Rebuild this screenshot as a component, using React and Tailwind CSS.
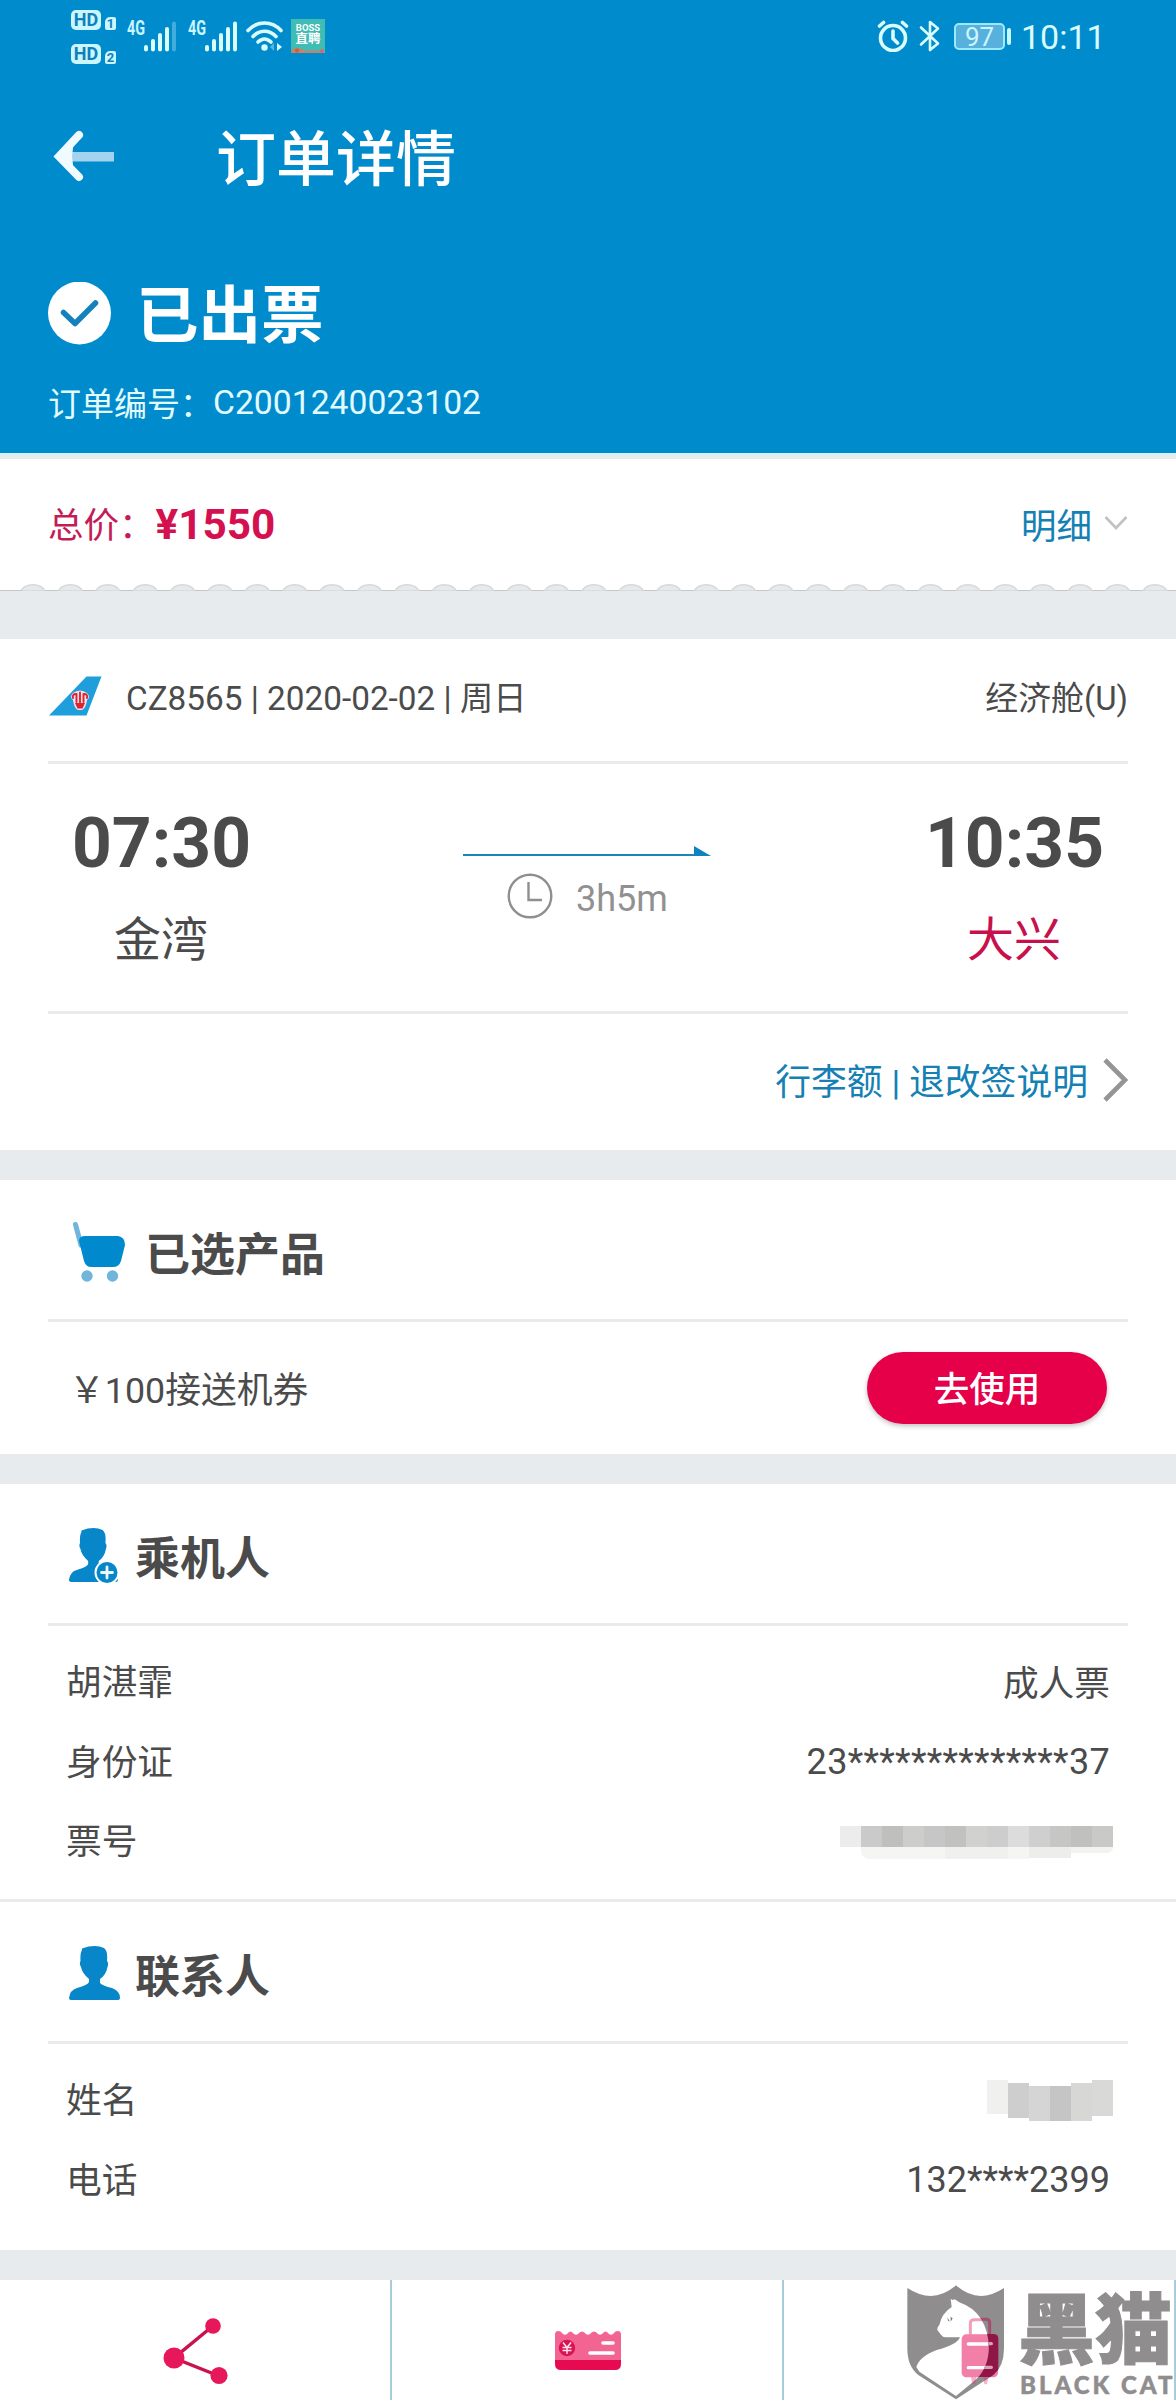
import React from "react";

const PALE = "#d9fcff";

function HdBadge({ n }) {
  return (
    <div className="flex h-[21px] items-end gap-[4px]">
      <div className="flex h-[20px] w-[30px] items-center justify-center rounded-[5px] bg-[#c9f6ff] text-[18px] leading-none font-bold text-[#0e80bd]">
        HD
      </div>
      <div className="flex h-[13px] w-[11px] items-center justify-center rounded-[2px] rounded-tl-[5px] bg-[#c9f6ff] text-[13px] leading-none font-bold text-[#0e80bd]">
        {n}
      </div>
    </div>
  );
}

function Signal({ weak }) {
  return (
    <div className="flex h-[31px] items-start">
      <span className="w-[17px] text-[20px] leading-[14px] font-bold text-[#c9f6ff]">
        <span className="inline-block origin-left scale-x-[0.72]">4G</span>
      </span>
      <svg width="33" height="31" viewBox="0 0 33 31" fill={PALE}>
        <rect x="0" y="24" width="4" height="6.5" rx="2" />
        <rect x="7" y="18" width="4" height="12.5" rx="2" />
        <rect x="14" y="12" width="4" height="18.5" rx="2" />
        <rect x="21" y="6" width="4" height="24.5" rx="2" />
        <rect x="28" y="0.5" width="4" height="30" rx="2" opacity={weak ? 0.3 : 1} />
      </svg>
    </div>
  );
}

function StatusBar() {
  return (
    <div className="flex h-[72px] justify-between pr-[74px] pl-[71px]">
      <div className="flex">
        <div className="flex flex-col gap-[13px] pt-[9px]">
          <HdBadge n="1" />
          <HdBadge n="2" />
        </div>
        <div className="flex gap-[11px] pt-[21px] pl-[11px]">
          <Signal weak />
          <Signal />
        </div>
        <svg className="mt-[20px] ml-[7px]" width="39" height="32" viewBox="0 0 39 32" fill="none" stroke={PALE} strokeWidth="3.600" strokeLinecap="round">
          <path d="M3 10.500C12 0.500 27 0.500 36 10.500" />
          <path d="M8 16.500C14.500 9.500 24.500 9.500 31 16.500" />
          <path d="M13 22C17 18 22 18 26 22" />
          <circle cx="19.500" cy="27.500" r="3.200" fill={PALE} stroke="none" />
          <path d="M29 23v8l-4-4z" fill={PALE} stroke="none" opacity="0.4" />
          <path d="M32 23l5 4-5 4z" fill={PALE} stroke="none" />
        </svg>
        <div className="relative mt-[19px] ml-[7px] flex h-[34px] w-[34px] flex-col items-center overflow-hidden bg-[#3fbcb4] pt-[4px] text-white">
          <span className="text-[9.500px] leading-[9px] font-bold">BOSS</span>
          <span className="text-[12.500px] leading-[14px] font-bold">直聘</span>
          <svg className="absolute bottom-0 left-0" width="34" height="6" viewBox="0 0 34 6">
            <path d="M0 3L5 1L10 2L15 4L22 3L28 4L33 1V6H0Z" fill="#b98670" />
            <circle cx="6" cy="3.500" r="2" fill="#e5532f" />
            <circle cx="12" cy="4" r="1.500" fill="#ef7a4b" />
            <circle cx="31" cy="4" r="1.500" fill="#d9606a" />
          </svg>
        </div>
      </div>
      <div className="flex">
        <svg className="mt-[20px]" width="32" height="32" viewBox="0 0 32 32" fill="none" stroke={PALE} strokeWidth="3.600" strokeLinecap="round">
          <circle cx="16" cy="18" r="12.500" />
          <path d="M16 11v7.500l4.500 4.500M2.500 6l4-3.500M29.500 6l-4-3.500" />
        </svg>
        <svg className="mt-[20px] ml-[10px]" width="22" height="32" viewBox="0 0 22 32" fill="none" stroke={PALE} strokeWidth="2.600" strokeLinejoin="round" strokeLinecap="round">
          <path d="M2 7.500L19 23.500L11 30V2L19 8.500L2 24.500" />
        </svg>
        <div className="mt-[23px] ml-[13px] flex h-[27px] w-[51px] items-center justify-center rounded-[5px] border-2 border-[#9ceaff] bg-[#58b0dd] text-[26px] leading-none text-[#c9f6ff]">
          97
        </div>
        <div className="mt-[28px] ml-[2px] h-[17px] w-[4px] rounded-full bg-[#c9f6ff]" />
        <span className="mt-[17px] ml-[10px] w-[81px] text-[34px] leading-[40px] text-[#d9fcff]">10:11</span>
      </div>
    </div>
  );
}

function Header() {
  return (
    <header className="h-[453px] bg-[#008bcd] text-white">
      <StatusBar />
      <div className="flex h-[172px] items-center pl-[52px]">
        <svg className="mb-[4px]" width="64" height="52" viewBox="0 0 64 52">
          <rect x="20" y="22" width="42" height="9.500" fill="#a3d3ee" />
          <path d="M27 5L7 26.500L27 47" fill="none" stroke="#f0fbff" strokeWidth="8" strokeLinecap="round" strokeLinejoin="miter" />
          <path d="M3 26.500L22 9L20 26.500L22 43Z" fill="#f0fbff" />
        </svg>
        <h1 className="ml-[100px] pt-[6px] text-[60px] leading-none font-medium">订单详情</h1>
      </div>
      <div className="flex h-[140px] items-center pl-[48px]">
        <svg width="63" height="64" viewBox="0 0 63 64">
          <circle cx="31.500" cy="31" r="31.500" fill="#fff" />
          <path d="M15.500 30.500L27 41.500L47.500 21" fill="none" stroke="#1481bd" strokeWidth="5.500" strokeLinecap="round" strokeLinejoin="round" />
        </svg>
        <span className="ml-[25px] pt-[7px] text-[62.500px] leading-none font-bold">已出票</span>
      </div>
      <div className="flex h-[38px] items-center pl-[48px] text-[33px] leading-none text-[#e2fbff]">
        <span className="pt-[2px]">订单编号：</span>
        <span className="text-[33.700px]">C2001240023102</span>
      </div>
    </header>
  );
}

function Scallops() {
  return (
    <svg className="block" width="1176" height="8" viewBox="0 0 1176 8">
      <defs>
        <pattern id="notch" x="14" width="37.400" height="8" patternUnits="userSpaceOnUse">
          <path d="M0 7.500H8" stroke="#c3c6c8" />
          <path d="M30 7.500H37.400" stroke="#c3c6c8" />
          <path d="M7 8C11 -0.500 27 -0.500 31 8Z" fill="#e6eaec" stroke="#d5d8d9" strokeWidth="1.500" />
        </pattern>
      </defs>
      <rect x="14" width="1162" height="8" fill="url(#notch)" />
      <path d="M0 7.500H22" stroke="#c3c6c8" />
    </svg>
  );
}

function PriceBar() {
  return (
    <section className="bg-white">
      <div className="h-[3px] bg-[#d9f0f6]" />
      <div className="h-[3px] bg-[#e8eaeb]" />
      <div className="flex h-[124px] items-center justify-between px-[48px] pt-[9px] text-[35.500px] leading-none">
        <div className="flex items-center text-[#c41c56]">
          <span className="pt-[3px]">总价：</span>
          <span className="ml-[1px] text-[42.300px] font-bold text-[#d4104f]">¥1550</span>
        </div>
        <div className="flex items-center text-[#1480b4]">
          <span className="pt-[5px]">明细</span>
          <svg className="mb-[6px] ml-[12px]" width="24" height="14" viewBox="0 0 24 14" fill="none" stroke="#c0c2c3" strokeWidth="2.600">
            <path d="M1.500 1L12 12L22.500 1" />
          </svg>
        </div>
      </div>
      <Scallops />
    </section>
  );
}

function TailFin() {
  return (
    <svg width="54" height="40" viewBox="0 0 54 40">
      <path d="M38.500 0.500H53.500L38.500 39.500H1Z" fill="#1e9fdc" />
      <path d="M25 17Q32 12 39 17Q43 21 39 24Q38 32 34 34H30Q26 32 25 24Q21 21 25 17Z" fill="#f3dfe8" />
      <path d="M25 22q-1 -4 3 -4M39 22q1 -4 -3 -4M28.500 18v8M32 16.500v10M35.500 18v8" fill="none" stroke="#dc2430" strokeWidth="1.900" strokeLinecap="round" />
      <path d="M27 27h10l-2.500 5.500h-5z" fill="#dc2430" />
    </svg>
  );
}

function FlightEnd({ time, place, placeClass }) {
  return (
    <div className="flex w-[227px] flex-col items-center pt-[45px]">
      <span className="text-[69.500px] leading-none font-bold">{time}</span>
      <span className={"mt-[37px] mr-[1px] text-[47px] leading-none " + placeClass}>{place}</span>
    </div>
  );
}

function FlightCard() {
  return (
    <section className="h-[511px] bg-white px-[48px] text-[#4b4b4b]">
      <div className="flex h-[122px] items-center justify-between text-[33.100px] leading-none">
        <div className="flex items-center">
          <div className="mb-[9px]">
            <TailFin />
          </div>
          <span className="mb-[2px] ml-[24px] text-[33.300px]">CZ8565 | 2020-02-02 | 周日</span>
        </div>
        <span className="mb-[1px] text-[32.900px]">经济舱(U)</span>
      </div>
      <div className="flex h-[253px] justify-between border-y-[3px] border-[#e9eaea]">
        <FlightEnd time="07:30" place="金湾" placeClass="text-[#4b4b4b]" />
        <div className="flex flex-col items-center pt-[81px]">
          <svg className="mr-[2px]" width="248" height="12" viewBox="0 0 248 12">
            <path d="M0 10H240" stroke="#1a86b5" strokeWidth="2" />
            <path d="M231 1L248 11H231Z" fill="#0f83bf" />
          </svg>
          <div className="mt-[16px] mr-[1px] flex items-center gap-[23px] text-[#919191]">
            <svg width="46" height="46" viewBox="0 0 46 46" fill="none" stroke="#8f8f8f" strokeWidth="2.400">
              <circle cx="23" cy="23" r="21.300" />
              <path d="M21.500 9V27H35" />
            </svg>
            <span className="pt-[6px] text-[36px] leading-none">3h5m</span>
          </div>
        </div>
        <FlightEnd time="10:35" place="大兴" placeClass="text-[#c8104c]" />
      </div>
      <div className="flex h-[136px] items-center justify-end text-[35.800px] leading-none text-[#1480b4]">
        <span className="pt-[4px]">行李额 | 退改签说明</span>
        <svg className="mb-[4px] ml-[15px]" width="25" height="44" viewBox="0 0 25 44" fill="none" stroke="#959595" strokeWidth="4.600">
          <path d="M2 2L22 22L2 42" />
        </svg>
      </div>
    </section>
  );
}

function CardTitle({ icon, children }) {
  return (
    <div className="flex h-[139px] items-center pt-[12px] text-[45px] leading-none font-bold text-[#4b4b4b]">
      {icon}
      {children}
    </div>
  );
}

function Row({ label, children }) {
  return (
    <div className="flex h-[79.400px] items-center justify-between pr-[18px] pl-[18px] text-[35.700px] leading-none text-[#4b4b4b]">
      <span className="pt-[1px]">{label}</span>
      {children}
    </div>
  );
}

function CartIcon() {
  return (
    <svg className="mr-[18px] mb-[8px] ml-[24px]" width="55" height="62" viewBox="0 0 55 62">
      <path d="M3.500 3.500L9 24" stroke="#6fb6da" strokeWidth="5" strokeLinecap="round" />
      <path d="M13 15H46Q53 16 53 24L49 40Q47 46 41 46H19Q14 46 12 40L7 20Q7 15 13 15Z" fill="#0089cd" />
      <circle cx="15" cy="55" r="5.700" fill="#6fb6da" />
      <circle cx="40.500" cy="55" r="5.700" fill="#6fb6da" />
    </svg>
  );
}

function PersonIcon({ plus }) {
  return (
    <svg className="mr-[12px] mb-[8px] ml-[21px]" width="54" height="56" viewBox="0 0 54 56">
      <g transform={plus ? "translate(-1 -1) scale(0.96 1)" : "translate(-1 -1)"}>
        <path d="M14 3.500Q27 -1 36 3Q40 6 39 16Q41 18 39.500 22Q38 30 32 34V38Q35 41 44 43Q52 46 52 53Q52 55 50 55H3Q1 55 1 53Q2 45 9 43Q20 40 21 37V34Q14 28 13 22Q11 19 12.500 16Q12 8 14 5Z" fill="#0787c9" />
      </g>
      {plus && (
        <g>
          <circle cx="38" cy="44.500" r="12.500" fill="#fff" />
          <circle cx="38" cy="44.500" r="10.500" fill="#0787c9" />
          <path d="M38 39V50M32.500 44.500H43.500" stroke="#eefaff" strokeWidth="2.800" strokeLinecap="round" />
        </g>
      )}
    </svg>
  );
}

function TicketMosaic() {
  return (
    <div className="mr-[-3px] flex flex-col">
      <div className="flex h-[21px]">
        <i className="w-[21px] bg-[#ececec]" />
        <i className="w-[21px] bg-[#cacaca]" />
        <i className="w-[21px] bg-[#bfbfbe]" />
        <i className="w-[21px] bg-[#cdcdcc]" />
        <i className="w-[21px] bg-[#c6c6c6]" />
        <i className="w-[21px] bg-[#c1c1c0]" />
        <i className="w-[21px] bg-[#d1d1d0]" />
        <i className="w-[21px] bg-[#cdcdcd]" />
        <i className="w-[21px] bg-[#dcdcdd]" />
        <i className="w-[21px] bg-[#cfcfcf]" />
        <i className="w-[21px] bg-[#c6c6c5]" />
        <i className="w-[21px] bg-[#c0c0bf]" />
        <i className="w-[21px] bg-[#c9c9c8]" />
      </div>
      <div className="ml-[21px] flex h-[12px]">
        <i className="w-[84px] rounded-bl-lg bg-[#f5f5f4]" />
        <i className="w-[63px] bg-[#f0f0ef]" />
        <i className="w-[21px] bg-[#f5f5f4]" />
        <i className="h-[11px] w-[42px] bg-[#ededec]" />
        <i className="h-[6px] w-[42px] rounded-br-full bg-[#f3f3f2]" />
      </div>
    </div>
  );
}

function NameMosaic() {
  return (
    <div className="mr-[-3px] mb-[2px] flex h-[41px]">
      <i className="h-[34px] w-[21px] bg-[#f0f0ee]" />
      <i className="mt-[3px] h-[35px] w-[21px] bg-[#cecece]" />
      <i className="mt-[6px] h-[35px] w-[21px] bg-[#d5d5d5]" />
      <i className="mt-[6px] h-[35px] w-[21px] bg-[#c5c5c5]" />
      <i className="mt-[3px] h-[38px] w-[21px] bg-[#d7d7d6]" />
      <i className="h-[36px] w-[21px] bg-[#d9d9d8]" />
    </div>
  );
}

function ShareIcon() {
  return (
    <svg width="66" height="68" viewBox="0 0 66 68" fill="#e6175a">
      <path d="M51 8L11 41L56 59" fill="none" stroke="#c9134e" strokeWidth="3.500" />
      <circle cx="11" cy="41" r="10.500" />
      <circle cx="50" cy="9" r="7.800" />
      <circle cx="56" cy="58.500" r="8.600" />
    </svg>
  );
}

function CouponIcon() {
  return (
    <svg width="66" height="40" viewBox="0 0 66 40">
      <path d="M0 30V4Q0 0 3 0Q6 0 7 2A3.500 3.500 0 0 0 13 2Q15.500 -1 18 2A3.500 3.500 0 0 0 24 2Q27 -1 30 2A3.500 3.500 0 0 0 36 2Q39 -1 42 2A3.500 3.500 0 0 0 48 2Q50.500 -1 53 2A3.500 3.500 0 0 0 59 2Q60 0 63 0Q66 0 66 4V30Z" fill="#f26592" />
      <path d="M0 29H66V33Q66 39 60 39H6Q0 39 0 33Z" fill="#e60a51" />
      <circle cx="12" cy="17" r="8.200" fill="#da1250" />
      <path d="M8 11.500L12 16.500L16 11.500M12 16V23M7.500 16.500H16.500M7.500 19.500H16.500" fill="none" stroke="#ffe3ec" strokeWidth="1.500" />
      <path d="M48 12H58M35 22H58" stroke="#fff" strokeWidth="3.600" strokeLinecap="round" />
    </svg>
  );
}

function SuitcaseIcon({ dark }) {
  const body = dark ? "#8f1647" : "#f27fa8";
  const trim = dark ? "#b06a86" : "#f8b3cb";
  return (
    <g>
      <path d="M632 703V668Q632 658 644 658H678Q689 658 689 668V703" fill="none" stroke={dark ? "#a3506f" : "#f0a0bd"} strokeWidth="9" />
      <path d="M634 830h16l-4 22h-8zM670 830h16l-4 22h-8z" fill={trim} />
      <rect x="606" y="702" width="109" height="129" rx="14" fill={body} />
      <path d="M626 731H694M626 802H694" stroke={dark ? "#dba0b6" : "#fff"} strokeWidth="10" strokeLinecap="round" />
    </g>
  );
}

const SHIELD =
  "M442 564Q520 615 588 556Q655 615 732 564V745Q732 800 700 825L588 898L475 825Q442 800 442 745ZM572 597L578 600L584 598L598 607Q640 622 662 655Q690 700 686 757Q680 815 640 845L588 888L478 815L469 801Q478 770 530 750Q590 735 600 712H558Q548 712 543 704L532 690Q531 682 538 675Q545 640 575 621Z";

function Watermark() {
  return (
    <div className="absolute right-0 bottom-0 flex h-[117px] w-[272px] text-[#8f8d8d]">
      <svg className="shrink-0" width="116" height="117" viewBox="432 549 348 351">
        <defs>
          <clipPath id="shield-area">
            <path d={SHIELD} clipRule="evenodd" />
          </clipPath>
        </defs>
        <path d={SHIELD} fill="#8f8d8d" fillRule="evenodd" />
        <path d="M562 652L569 664L564 662ZM572 650L578 655L572 665Z" fill="#77757a" />
        <g clipPath="url(#shield-area)">
          <SuitcaseIcon dark />
        </g>
      </svg>
      <div className="flex flex-col pt-[11px] whitespace-nowrap">
        <span className="ml-[-2px] h-[76px] text-[77px] leading-[76px] font-black [-webkit-text-stroke:1px_#8f8d8d]">黑猫</span>
        <span className="mt-[3px] h-[24px] w-[156px] font-['Lato',sans-serif] text-[24px] leading-[24px] font-black tracking-[3px] [-webkit-text-stroke:0.5px_#8f8d8d]">
          BLACK CAT
        </span>
      </div>
    </div>
  );
}

function Footer() {
  return (
    <footer className="relative grid h-[120px] grid-cols-3 overflow-hidden bg-white">
      <div className="flex items-center justify-center border-r-2 border-[#a9ccd9] pt-[22px] pl-[2px]">
        <ShareIcon />
      </div>
      <div className="flex items-center justify-center border-r-2 border-[#a9ccd9] pt-[22px] pl-[2px]">
        <CouponIcon />
      </div>
      <div className="flex items-center justify-center border-r-2 border-[#a9ccd9] pt-[22px] pl-[2px]">
        <svg width="38" height="67" viewBox="604 653 114 201">
          <SuitcaseIcon />
        </svg>
      </div>
      <Watermark />
    </footer>
  );
}

export default function App() {
  return (
    <main className="h-[2400px] w-[1176px] overflow-hidden bg-[#e7ebed] font-['Roboto','Noto_Sans_CJK_SC',sans-serif]">
      <Header />
      <PriceBar />
      <div className="h-[48px]" />
      <FlightCard />
      <div className="h-[30px]" />
      <section className="h-[274px] bg-white px-[48px]">
        <CardTitle icon={<CartIcon />}>已选产品</CardTitle>
        <div className="flex h-[135px] items-center justify-between border-t-[3px] border-[#e9eaea] pr-[21px] pl-[21px] text-[35.800px] leading-none text-[#4b4b4b]">
          <span className="pt-[7px]">￥100接送机券</span>
          <button className="h-[72px] w-[240px] rounded-full bg-[#e50049] pt-[6px] text-[35.500px] leading-none font-medium text-white shadow-[0_2px_5px_rgba(0,0,0,0.25)]">
            去使用
          </button>
        </div>
      </section>
      <div className="h-[30px]" />
      <section className="h-[415px] bg-white px-[48px]">
        <CardTitle icon={<PersonIcon plus />}>乘机人</CardTitle>
        <div className="border-t-[3px] border-[#e9eaea] pt-[18px]">
          <Row label="胡湛霏">
            <span className="pt-[2px]">成人票</span>
          </Row>
          <Row label="身份证">
            <span className="mb-[2px] text-[36px] tracking-[0.300px]">23**************37</span>
          </Row>
          <Row label="票号">
            <TicketMosaic />
          </Row>
        </div>
      </section>
      <section className="h-[351px] border-t-[3px] border-[#e9eaea] bg-white px-[48px]">
        <CardTitle icon={<PersonIcon />}>联系人</CardTitle>
        <div className="border-t-[3px] border-[#e9eaea] pt-[18px]">
          <Row label="姓名">
            <NameMosaic />
          </Row>
          <Row label="电话">
            <span className="mb-[2px] text-[36px]">132****2399</span>
          </Row>
        </div>
      </section>
      <div className="h-[30px]" />
      <Footer />
    </main>
  );
}
